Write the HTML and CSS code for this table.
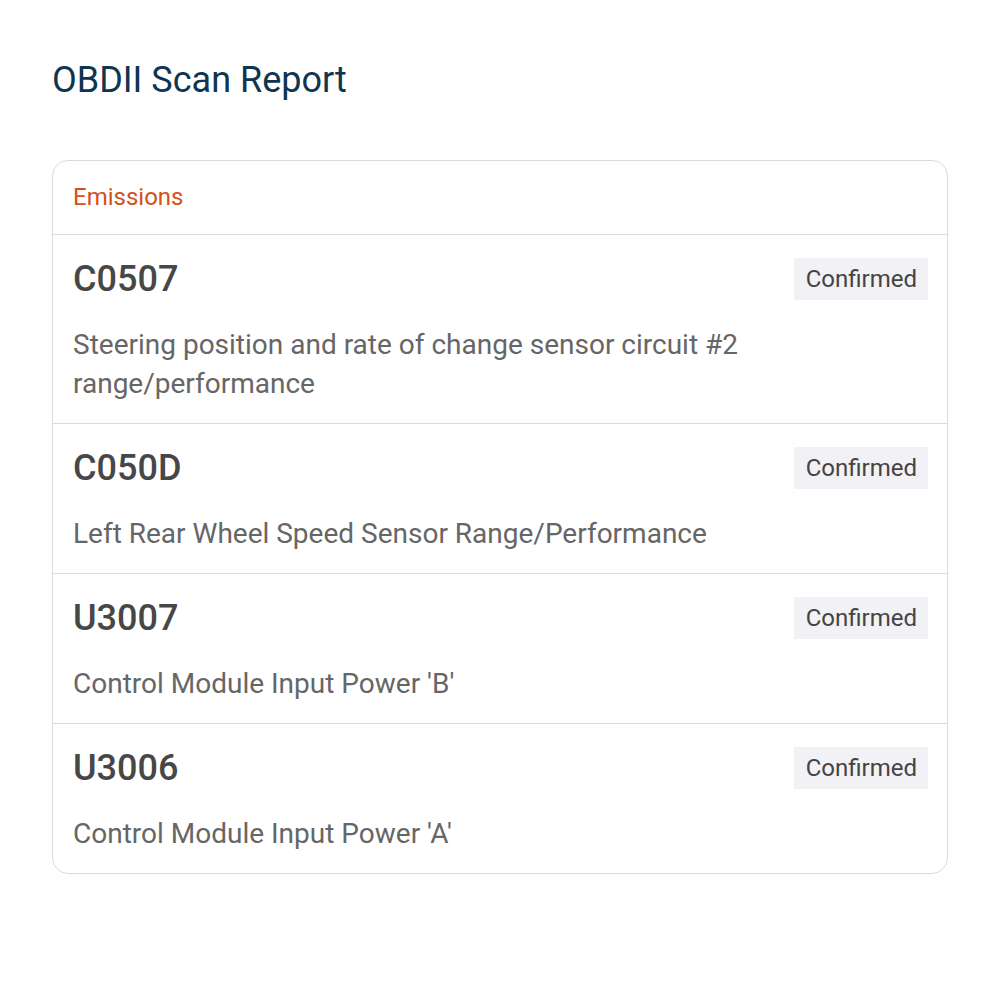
FILE: index.html
```html
<!DOCTYPE html>
<html lang="en">
    <head>
        <meta charset="UTF-8">
        <meta name="viewport" content="width=device-width, initial-scale=1.0">
        <title>OBDII Scan Report</title>
        <link rel="stylesheet" href="styles.css">
    </head>
    <body>
        <h1 class="page-title">OBDII Scan Report</h1>

        <div class="report-card">
            <div class="report-header">Emissions</div>

            <div class="code-row">
                <div class="code-top">
                    <span class="code-id">C0507</span>
                    <span class="code-status">Confirmed</span>
                </div>
                <p class="code-desc">Steering position and rate of change sensor circuit #2 range/performance</p>
            </div>

            <div class="code-row">
                <div class="code-top">
                    <span class="code-id">C050D</span>
                    <span class="code-status">Confirmed</span>
                </div>
                <p class="code-desc">Left Rear Wheel Speed Sensor Range/Performance</p>
            </div>

            <div class="code-row">
                <div class="code-top">
                    <span class="code-id">U3007</span>
                    <span class="code-status">Confirmed</span>
                </div>
                <p class="code-desc">Control Module Input Power 'B'</p>
            </div>

            <div class="code-row">
                <div class="code-top">
                    <span class="code-id">U3006</span>
                    <span class="code-status">Confirmed</span>
                </div>
                <p class="code-desc">Control Module Input Power 'A'</p>
            </div>
        </div>
    </body>
</html>
```

FILE: styles.css
```css
body {
    margin: 0;
    padding: 52px 52px;
    font-family: Roboto, "Liberation Sans", sans-serif;
    background-color: #fff;
}
.page-title {
    margin: 0 0 52px 0;
    font-size: 36px;
    font-weight: 400;
    line-height: 56px;
    color: #0f3550;
}
.report-card {
    border: 1px solid #dcdcdc;
    border-radius: 16px;
    overflow: hidden;
}
.report-header {
    padding: 0 20px;
    height: 73px;
    line-height: 72px;
    font-size: 24px;
    color: #d4511a;
    border-bottom: 1px solid #dcdcdc;
}
.code-row {
    padding: 23px 19px 20px 20px;
    border-bottom: 1px solid #dcdcdc;
}
.code-row:last-child {
    border-bottom: none;
}
.code-top {
    display: flex;
    justify-content: space-between;
    align-items: center;
    height: 42px;
}
.code-id {
    font-size: 36px;
    font-weight: 500;
    color: #474747;
}
.code-status {
    padding: 0 11px 0 12px;
    height: 42px;
    line-height: 42px;
    font-size: 24px;
    font-weight: 400;
    color: #444;
    background-color: #f2f1f6;
}
.code-desc {
    margin: 25px 0 0;
    font-size: 28px;
    line-height: 39px;
    color: #666;
}
```
